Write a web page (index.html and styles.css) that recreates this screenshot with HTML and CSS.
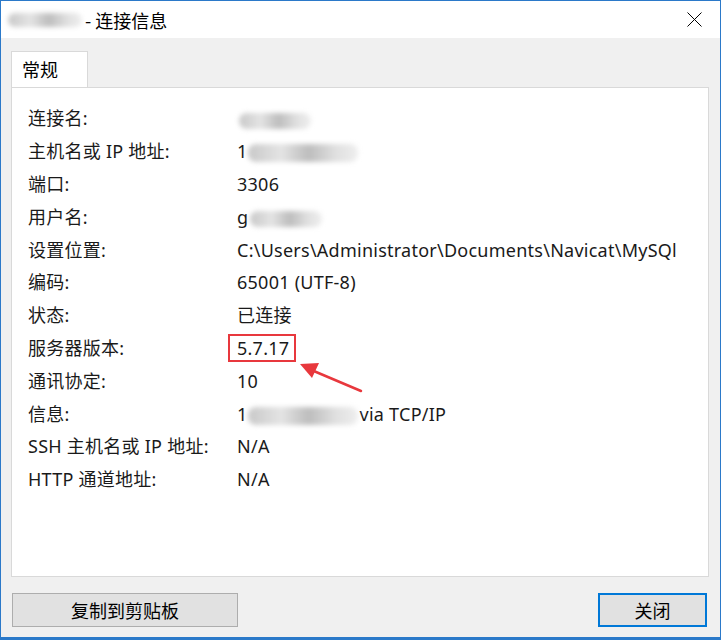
FILE: index.html
```html
<!DOCTYPE html>
<html lang="zh-CN">
<head>
    <meta charset="UTF-8">
    <title>连接信息</title>
    <link rel="stylesheet" href="styles.css">
</head>
<body>
    <div class="window">
        <div class="titlebar">
            <span class="blur blur-title"></span>
            <span class="title">- 连接信息</span>
            <svg class="close-x" width="15" height="15" viewBox="0 0 15 15">
                <path d="M0.5 0.5 L14.5 14.5 M14.5 0.5 L0.5 14.5" stroke="#000" stroke-width="1" fill="none"/>
            </svg>
        </div>

        <div class="body">
            <div class="tabs">
                <div class="tab">常规</div>
            </div>

            <div class="panel">
                <div class="info">
                    <div class="label">连接名:</div>
                    <div class="value"><span class="blur blur-short"></span></div>

                    <div class="label">主机名或 IP 地址:</div>
                    <div class="value">1<span class="blur blur-long"></span></div>

                    <div class="label">端口:</div>
                    <div class="value">3306</div>

                    <div class="label">用户名:</div>
                    <div class="value">g<span class="blur blur-short"></span></div>

                    <div class="label">设置位置:</div>
                    <div class="value">C:\Users\Administrator\Documents\Navicat\MySQl</div>

                    <div class="label">编码:</div>
                    <div class="value">65001 (UTF-8)</div>

                    <div class="label">状态:</div>
                    <div class="value">已连接</div>

                    <div class="label">服务器版本:</div>
                    <div class="value"><span class="mark">5.7.17</span></div>

                    <div class="label">通讯协定:</div>
                    <div class="value">10</div>

                    <div class="label">信息:</div>
                    <div class="value">1<span class="blur blur-long"></span>via TCP/IP</div>

                    <div class="label">SSH 主机名或 IP 地址:</div>
                    <div class="value">N/A</div>

                    <div class="label">HTTP 通道地址:</div>
                    <div class="value">N/A</div>
                </div>

                <!-- 红色箭头 -->
                <svg class="arrow" width="70" height="40" viewBox="0 0 70 40">
                    <path d="M13 10 L65 32" stroke="#e8383d" stroke-width="2.5" stroke-linecap="round"/>
                    <polygon points="4,5 23,4 16,19" fill="#e8383d"/>
                </svg>
            </div>

            <div class="footer">
                <button class="btn btn-copy">复制到剪贴板</button>
                <button class="btn btn-close">关闭</button>
            </div>
        </div>
    </div>
</body>
</html>
```

FILE: styles.css
```css
body {
    margin: 0;
    font-family: "Noto Sans", "Noto Sans CJK SC", sans-serif;
    font-size: 18px;
    color: #000;
}

.window {
    width: 721px;
    height: 640px;
    box-sizing: border-box;
    border: 1px solid #2b79c9;
    border-bottom-width: 3px;
    background-color: #f0f0f0;
    display: flex;
    flex-direction: column;
}

.titlebar {
    height: 37px;
    background-color: #fff;
    display: flex;
    align-items: center;
    padding-left: 7px;
    position: relative;
}

.title {
    font-family: "Noto Sans CJK SC", sans-serif;
    font-size: 18px;
    margin-left: 3px;
}

.close-x {
    position: absolute;
    right: 18px;
    top: 11px;
}

.blur {
    display: inline-block;
    background: linear-gradient(90deg, #c8c8c8, #e4e4e4 30%, #bdbdbd 55%, #e0e0e0 80%, #eeeeee);
    filter: blur(2.5px);
    vertical-align: middle;
    border-radius: 8px;
}

.blur-title {
    width: 74px;
    height: 14px;
}

.blur-short {
    width: 72px;
    height: 16px;
    margin-left: 2px;
}

.blur-long {
    width: 110px;
    height: 18px;
    margin-right: 2px;
}

.body {
    flex: 1;
    display: flex;
    flex-direction: column;
    padding: 13px 11px 0 10px;
}

.tabs {
    display: flex;
}

.tab {
    width: 65px;
    height: 36px;
    padding-left: 10px;
    line-height: 34px;
    background-color: #fff;
    border: 1px solid #d9d9d9;
    border-bottom: none;
    font-family: "Noto Sans CJK SC", sans-serif;
    font-size: 18px;
    margin-bottom: -1px;
    position: relative;
}

.panel {
    height: 490px;
    box-sizing: border-box;
    background-color: #fff;
    border: 1px solid #d9d9d9;
    position: relative;
    padding: 14px 0 0 16px;
}

.info {
    display: grid;
    grid-template-columns: 209px 1fr;
    grid-auto-rows: 32.8px;
    align-items: center;
}

.label, .value {
    white-space: nowrap;
    font-family: "Noto Sans", "Noto Sans CJK SC", sans-serif;
    font-size: 18px;
    line-height: 24px;
    letter-spacing: 0.25px;
    color: #1a1a1a;
}

.mark {
    display: inline-block;
    border: 2px solid #e8383d;
    padding: 1px 5px 1px 7px;
    margin-left: -9px;
    line-height: 22px;
}

.arrow {
    position: absolute;
    left: 284px;
    top: 271px;
}

.footer {
    display: flex;
    justify-content: space-between;
    padding: 16px 2px 0 1px;
}

.btn {
    height: 34px;
    font-family: "Noto Sans CJK SC", sans-serif;
    font-size: 18px;
    color: #000;
    background-color: #e1e1e1;
    border: 1px solid #adadad;
    padding: 0;
}

.btn-copy {
    width: 226px;
}

.btn-close {
    width: 109px;
    border: 2px solid #0078d7;
}
```
